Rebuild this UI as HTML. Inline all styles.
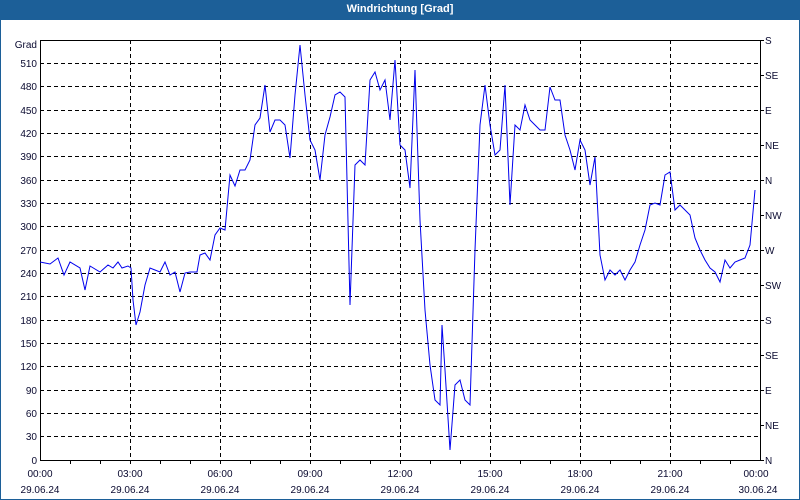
<!DOCTYPE html>
<html><head><meta charset="utf-8"><style>
html,body{margin:0;padding:0;}
body{width:800px;height:500px;background:#fff;position:relative;overflow:hidden;font-family:"Liberation Sans",sans-serif;}
.frame{position:absolute;left:0;top:0;width:798px;height:498px;border:1px solid #1c5f98;}
.title{position:absolute;left:0;top:0;width:800px;height:20px;background:#1c5f98;color:#fff;font-size:11px;font-weight:bold;text-align:center;line-height:18px;}
</style></head><body>
<div class="frame"></div>
<div class="title">Windrichtung [Grad]</div>
<svg width="800" height="500" style="position:absolute;left:0;top:0" font-family="Liberation Sans, sans-serif" font-size="10" fill="#0a0a30">
<g stroke="#000" stroke-width="1" stroke-dasharray="4,3" shape-rendering="crispEdges">
<line x1="40" x2="760" y1="63.5" y2="63.5"/><line x1="40" x2="760" y1="86.5" y2="86.5"/><line x1="40" x2="760" y1="110.5" y2="110.5"/><line x1="40" x2="760" y1="133.5" y2="133.5"/><line x1="40" x2="760" y1="156.5" y2="156.5"/><line x1="40" x2="760" y1="180.5" y2="180.5"/><line x1="40" x2="760" y1="203.5" y2="203.5"/><line x1="40" x2="760" y1="226.5" y2="226.5"/><line x1="40" x2="760" y1="250.5" y2="250.5"/><line x1="40" x2="760" y1="273.5" y2="273.5"/><line x1="40" x2="760" y1="296.5" y2="296.5"/><line x1="40" x2="760" y1="320.5" y2="320.5"/><line x1="40" x2="760" y1="343.5" y2="343.5"/><line x1="40" x2="760" y1="366.5" y2="366.5"/><line x1="40" x2="760" y1="390.5" y2="390.5"/><line x1="40" x2="760" y1="413.5" y2="413.5"/><line x1="40" x2="760" y1="436.5" y2="436.5"/>
<line y1="40" y2="460" x1="130.5" x2="130.5"/><line y1="40" y2="460" x1="220.5" x2="220.5"/><line y1="40" y2="460" x1="310.5" x2="310.5"/><line y1="40" y2="460" x1="400.5" x2="400.5"/><line y1="40" y2="460" x1="490.5" x2="490.5"/><line y1="40" y2="460" x1="580.5" x2="580.5"/><line y1="40" y2="460" x1="670.5" x2="670.5"/>
</g>
<g stroke="#000" stroke-width="1" shape-rendering="crispEdges" fill="none">
<path d="M40.5 40.5H760.5V460.5H40.5Z"/>
<path d="M70.5 460v4M100.5 460v4M130.5 460v4M160.5 460v4M190.5 460v4M220.5 460v4M250.5 460v4M280.5 460v4M310.5 460v4M340.5 460v4M370.5 460v4M400.5 460v4M430.5 460v4M460.5 460v4M490.5 460v4M520.5 460v4M550.5 460v4M580.5 460v4M610.5 460v4M640.5 460v4M670.5 460v4M700.5 460v4M730.5 460v4"/>
<path d="M760 40.5h4M760 75.5h4M760 110.5h4M760 145.5h4M760 180.5h4M760 215.5h4M760 250.5h4M760 285.5h4M760 320.5h4M760 355.5h4M760 390.5h4M760 425.5h4M760 460.5h4"/>
</g>
<polyline fill="none" stroke="#0000ee" stroke-width="1" points="40,262 50,264 58,258 64,275 70,262 80,268 85,290 90,266 100,272 108,265 113,268 118,262 122,268 128,266 131,268 133,300 136,325 140,312 145,285 150,268 155,270 160,272 165,262 170,275 175,272 180,292 185,273 190,272 197,272 200,255 205,253 210,260 215,235 220,228 225,230 230,175 235,186 240,170 245,170 250,160 255,125 260,118 265,85 270,132 275,120 280,120 285,125 290,158 295,95 300,45 305,95 310,140 315,150 320,180 325,135 330,117 335,95 340,92 345,97 350,305 355,165 360,160 365,165 370,80 375,72 380,90 385,80 390,120 395,60 400,145 405,150 410,188 415,70 420,220 425,310 430,365 435,400 440,405 442,325 445,370 450,450 455,385 460,380 465,400 470,405 475,250 480,125 485,85 490,125 495,155 500,150 505,85 510,205 515,125 520,130 525,105 530,120 535,125 540,130 545,130 550,87 555,100 560,100 565,135 570,150 575,170 580,140 585,150 590,185 595,157 600,255 605,280 610,270 615,275 620,270 625,280 630,270 635,262 640,245 645,230 650,205 655,203 660,205 665,175 670,172 675,210 680,205 685,210 690,215 695,238 700,250 705,260 710,268 715,272 720,282 725,260 730,268 735,262 740,260 745,258 750,245 755,190"/>
<g text-anchor="end">
<text x="37" y="48">Grad</text>
<text x="37" y="67">510</text><text x="37" y="90">480</text><text x="37" y="114">450</text><text x="37" y="137">420</text><text x="37" y="160">390</text><text x="37" y="184">360</text><text x="37" y="207">330</text><text x="37" y="230">300</text><text x="37" y="254">270</text><text x="37" y="277">240</text><text x="37" y="300">210</text><text x="37" y="324">180</text><text x="37" y="347">150</text><text x="37" y="370">120</text><text x="37" y="394">90</text><text x="37" y="417">60</text><text x="37" y="440">30</text><text x="37" y="464">0</text>
</g>
<g>
<text x="765" y="44">S</text><text x="765" y="79">SE</text><text x="765" y="114">E</text><text x="765" y="149">NE</text><text x="765" y="184">N</text><text x="765" y="219">NW</text><text x="765" y="254">W</text><text x="765" y="289">SW</text><text x="765" y="324">S</text><text x="765" y="359">SE</text><text x="765" y="394">E</text><text x="765" y="429">NE</text><text x="765" y="464">N</text>
</g>
<g text-anchor="middle">
<text x="40" y="477">00:00</text><text x="130" y="477">03:00</text><text x="220" y="477">06:00</text><text x="310" y="477">09:00</text><text x="400" y="477">12:00</text><text x="490" y="477">15:00</text><text x="580" y="477">18:00</text><text x="670" y="477">21:00</text><text x="756" y="477">00:00</text>
<text x="40" y="493">29.06.24</text><text x="130" y="493">29.06.24</text><text x="220" y="493">29.06.24</text><text x="310" y="493">29.06.24</text><text x="400" y="493">29.06.24</text><text x="490" y="493">29.06.24</text><text x="580" y="493">29.06.24</text><text x="670" y="493">29.06.24</text><text x="758" y="493">30.06.24</text>
</g>
</svg>
</body></html>
